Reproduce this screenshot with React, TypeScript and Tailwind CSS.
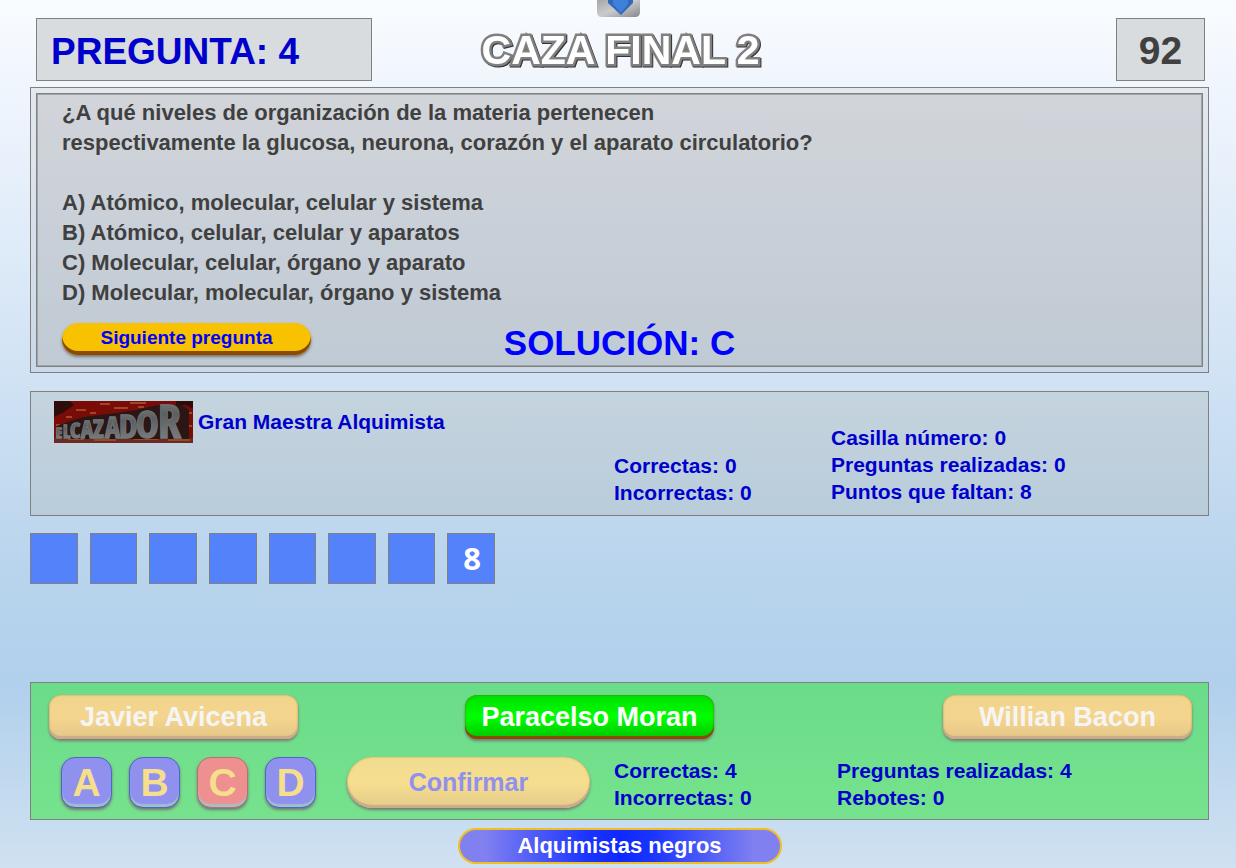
import { clsx } from "clsx";
import type { ReactNode } from "react";

const PLAYERS = [
  { name: "Javier Avicena", active: false },
  { name: "Paracelso Moran", active: true },
  { name: "Willian Bacon", active: false },
];

const ANSWERS = ["A", "B", "C", "D"];
const SOLUTION = "C";
const STEPS = 8;

const OPTIONS = [
  "A) Atómico, molecular, celular y sistema",
  "B) Atómico, celular, celular y aparatos",
  "C) Molecular, celular, órgano y aparato",
  "D) Molecular, molecular, órgano y sistema",
];

// Letters grow from left to right, as on the show's wall sign
const LOGO_LETTERS = [
  { char: "E", x: 2, size: 14 },
  { char: "L", x: 9, size: 18 },
  { char: "C", x: 16, size: 22 },
  { char: "A", x: 27, size: 23 },
  { char: "Z", x: 39, size: 25 },
  { char: "A", x: 51, size: 28 },
  { char: "D", x: 65, size: 33 },
  { char: "O", x: 82, size: 38 },
  { char: "R", x: 104, size: 46 },
];

const Stats = ({ children }: { children: ReactNode }) => (
  <div className="text-[21px] leading-[27px] font-bold text-[#0000cc] whitespace-nowrap">
    {children}
  </div>
);

const HomeTab = () => (
  <button
    type="button"
    aria-label="Desplegar"
    className="absolute top-0 left-1/2 -translate-x-1/2"
  >
    <svg width="44" height="18" viewBox="0 0 44 18">
      <defs>
        <linearGradient id="tab" x1="0" y1="0" x2="1" y2="1">
          <stop offset="0" stopColor="#a0a2a5" />
          <stop offset="0.5" stopColor="#c9cbcd" />
          <stop offset="1" stopColor="#85888b" />
        </linearGradient>
      </defs>
      <path d="M1 -2H44V12Q44 17 39 17H6Q1 17 1 12Z" fill="url(#tab)" />
      <path d="M12 0H37V3L25 15L12 3Z" fill="#3568b5" />
      <path d="M17 0H32V4L25 13L17 4Z" fill="#3f80dc" />
    </svg>
  </button>
);

const HunterLogo = () => (
  <svg
    width="139"
    height="42"
    viewBox="0 0 139 42"
    role="img"
    aria-label="El Cazador"
    className="shrink-0 overflow-visible"
  >
    <defs>
      <linearGradient id="metal" x1="0" y1="0" x2="0" y2="1">
        <stop offset="0" stopColor="#8b8d8f" />
        <stop offset="0.4" stopColor="#5c5f61" />
        <stop offset="1" stopColor="#85898b" />
      </linearGradient>
    </defs>
    <rect width="139" height="42" fill="#7a0c08" />
    <path d="M0 0H16L20 4L10 11L0 16Z" fill="#2e0c0a" />
    <path d="M122 0H139V8L132 4H122Z" fill="#2e0c0a" />
    <path
      d="M22 9H32M46 3H56M60 7H74M76 2H92M84 6H90M12 16H18M36 12H42M2 24H6M130 12H138M132 25H138"
      stroke="#c98040"
      strokeWidth="1"
    />
    <path d="M0 37H139V42H0Z" fill="#6b2a22" />
    <path d="M14 38H30M40 39H62M80 38H104M114 39H136" stroke="#c06a35" />
    <path
      d="M3 25L16 20L30 16L62 12L82 9L104 4H128L135 9V38H3Z"
      fill="#2a1614"
    />
    <g
      fill="url(#metal)"
      stroke="#777b7d"
      strokeWidth="1.4"
      paintOrder="stroke"
      fontWeight="700"
      fontFamily="'Liberation Sans Narrow','Open Sans Condensed','DejaVu Sans Condensed',sans-serif"
    >
      {LOGO_LETTERS.map(({ char, x, size }) => (
        <text key={x} x={x} y="37" fontSize={size}>
          {char}
        </text>
      ))}
    </g>
  </svg>
);

const PlayerButton = ({ name, active }: { name: string; active: boolean }) => (
  <button
    type="button"
    className={clsx(
      "h-11 w-[249px] rounded-xl text-[27px] leading-none font-bold whitespace-nowrap",
      active
        ? "bg-linear-to-b from-[#00e000] via-[#00ff00] to-[#00c400] text-white shadow-[inset_0_-3px_0_#8a4b00,inset_0_0_2px_#606000,0_2px_3px_#777]"
        : "bg-linear-to-b from-[#f0d48c] via-[#f5d58e] to-[#e4c688] text-[#f5f5f5] shadow-[inset_0_-3px_1px_#ccab88,inset_0_0_2px_#c89030,0_2px_3px_#777]"
    )}
  >
    {name}
  </button>
);

const AnswerButton = ({ letter }: { letter: string }) => (
  <button
    type="button"
    className={clsx(
      "size-[51px] rounded-[14px] border text-[39px] leading-none font-bold text-[#f5de8c]",
      letter === SOLUTION
        ? "border-[#b87070] bg-[#ef9090] shadow-[inset_0_-3px_1px_#a5bfc6,0_2px_3px_#777]"
        : "border-[#4a68c4] bg-[#9090ef] shadow-[inset_0_-3px_1px_#9dbfce,0_2px_3px_#777]"
    )}
  >
    {letter}
  </button>
);

export default function App() {
  return (
    <div className="relative min-h-screen bg-[linear-gradient(to_bottom,#f9fcff_0%,#eff5fd_11%,#d0e2f4_44%,#bad5ed_64%,#b1d0ec_79%,#d0e1f1_100%)] pt-[18px] pr-[27px] pl-[30px] font-['Liberation_Sans',Arial,sans-serif]">
      <HomeTab />
      <header className="grid grid-cols-[1fr_auto_1fr] items-center pr-1 pl-1.5">
        <div className="h-[63px] w-[336px] border border-[#808080] bg-[#d9dcdf] pl-3.5 text-[37px] leading-[66px] font-bold text-[#0000cc]">
          PREGUNTA: 4
        </div>
        <h1 className="pt-0.5 text-[41px] leading-none font-bold text-white drop-shadow-[1px_1px_0_#333] [-webkit-text-stroke:5px_#808080] [paint-order:stroke_fill]">
          CAZA FINAL 2
        </h1>
        <div className="h-[63px] w-[89px] justify-self-end border border-[#808080] bg-[#d9dcdf] text-center text-[39px] leading-[64px] font-bold text-[#404040]">
          92
        </div>
      </header>

      <main>
        <section className="mt-1.5 border border-[#808080] bg-[#a0a0a0]/15 p-[5px]">
          <div className="border border-[#808080] bg-[#a8aaaa]/30 px-[25px] pt-1 pb-[3px] shadow-[inset_0_0_0_1px_#a0a5aa]">
            <div className="text-[22px] leading-[30px] font-bold text-[#404040]">
              <p>
                ¿A qué niveles de organización de la materia pertenecen
                <br />
                respectivamente la glucosa, neurona, corazón y el aparato
                circulatorio?
              </p>
              <ul className="mt-[30px]">
                {OPTIONS.map((option) => (
                  <li key={option}>{option}</li>
                ))}
              </ul>
            </div>
            <div className="mt-[15px] grid grid-cols-[1fr_auto_1fr] items-start">
              <button
                type="button"
                className="h-8 w-[249px] rounded-full bg-[#f8c200] pb-1 text-[19px] leading-none font-bold text-[#0000ff] shadow-[inset_0_-4px_0_#8a4b00,0_2px_3px_#777]"
              >
                Siguiente pregunta
              </button>
              <p className="text-[35px] leading-10 font-bold text-[#0000ff]">
                SOLUCIÓN: C
              </p>
            </div>
          </div>
        </section>

        <section className="mt-[18px] grid h-[125px] grid-cols-[560px_217px_1fr] border border-[#808080] bg-[#a0a08c]/20 pt-[9px] pl-[23px]">
          <div className="flex items-start gap-[5px]">
            <HunterLogo />
            <p className="text-[21px] leading-[42px] font-bold text-[#0000cc]">
              Gran Maestra Alquimista
            </p>
          </div>
          <div className="pt-[51px]">
            <Stats>
              <p>Correctas: 0</p>
              <p>Incorrectas: 0</p>
            </Stats>
          </div>
          <div className="pt-[23px]">
            <Stats>
              <p>Casilla número: 0</p>
              <p>Preguntas realizadas: 0</p>
              <p>Puntos que faltan: 8</p>
            </Stats>
          </div>
        </section>

        <ol className="mt-[17px] grid w-[465px] grid-cols-8 gap-x-3">
          {Array.from({ length: STEPS }, (_, i) => (
            <li
              key={i}
              className="h-[51px] border border-[#808080] bg-[#5382fa] pl-0.5 text-center font-['Noto_Sans',sans-serif] text-[31px] leading-[48px] font-bold text-white"
            >
              {i === STEPS - 1 ? STEPS : ""}
            </li>
          ))}
        </ol>

        <section className="mt-[98px] border border-[#808080] bg-linear-to-b from-[#6bdc8a] to-[#76e28d] pt-3 pb-2">
          <div className="grid grid-cols-[416px_1fr_auto] pr-4 pl-[18px]">
            {PLAYERS.map((player) => (
              <PlayerButton key={player.name} {...player} />
            ))}
          </div>
          <div className="mt-[18px] flex items-start pl-[30px]">
            <div className="flex gap-[17px]">
              {ANSWERS.map((letter) => (
                <AnswerButton key={letter} letter={letter} />
              ))}
            </div>
            <button
              type="button"
              className="ml-[31px] h-[51px] w-[243px] rounded-full bg-linear-to-b from-[#f0dc90] via-[#f7de8f] to-[#e4cb8a] text-[25px] leading-none font-bold text-[#9090ef] shadow-[inset_0_-3px_1px_#ccab88,inset_0_0_2px_#c8a040,0_2px_3px_#777]"
            >
              Confirmar
            </button>
            <div className="ml-6 w-[223px]">
              <Stats>
                <p>Correctas: 4</p>
                <p>Incorrectas: 0</p>
              </Stats>
            </div>
            <Stats>
              <p>Preguntas realizadas: 4</p>
              <p>Rebotes: 0</p>
            </Stats>
          </div>
        </section>

        <p className="mx-auto mt-2 h-9 w-[324px] rounded-[18px] border-2 border-[#f0c020] bg-[linear-gradient(to_right,#8080f0_8%,#1a34ff_40%,#0f28ff_50%,#1a34ff_60%,#8080f0_92%)] text-center text-[22px] leading-8 font-bold text-white">
          Alquimistas negros
        </p>
      </main>
    </div>
  );
}
